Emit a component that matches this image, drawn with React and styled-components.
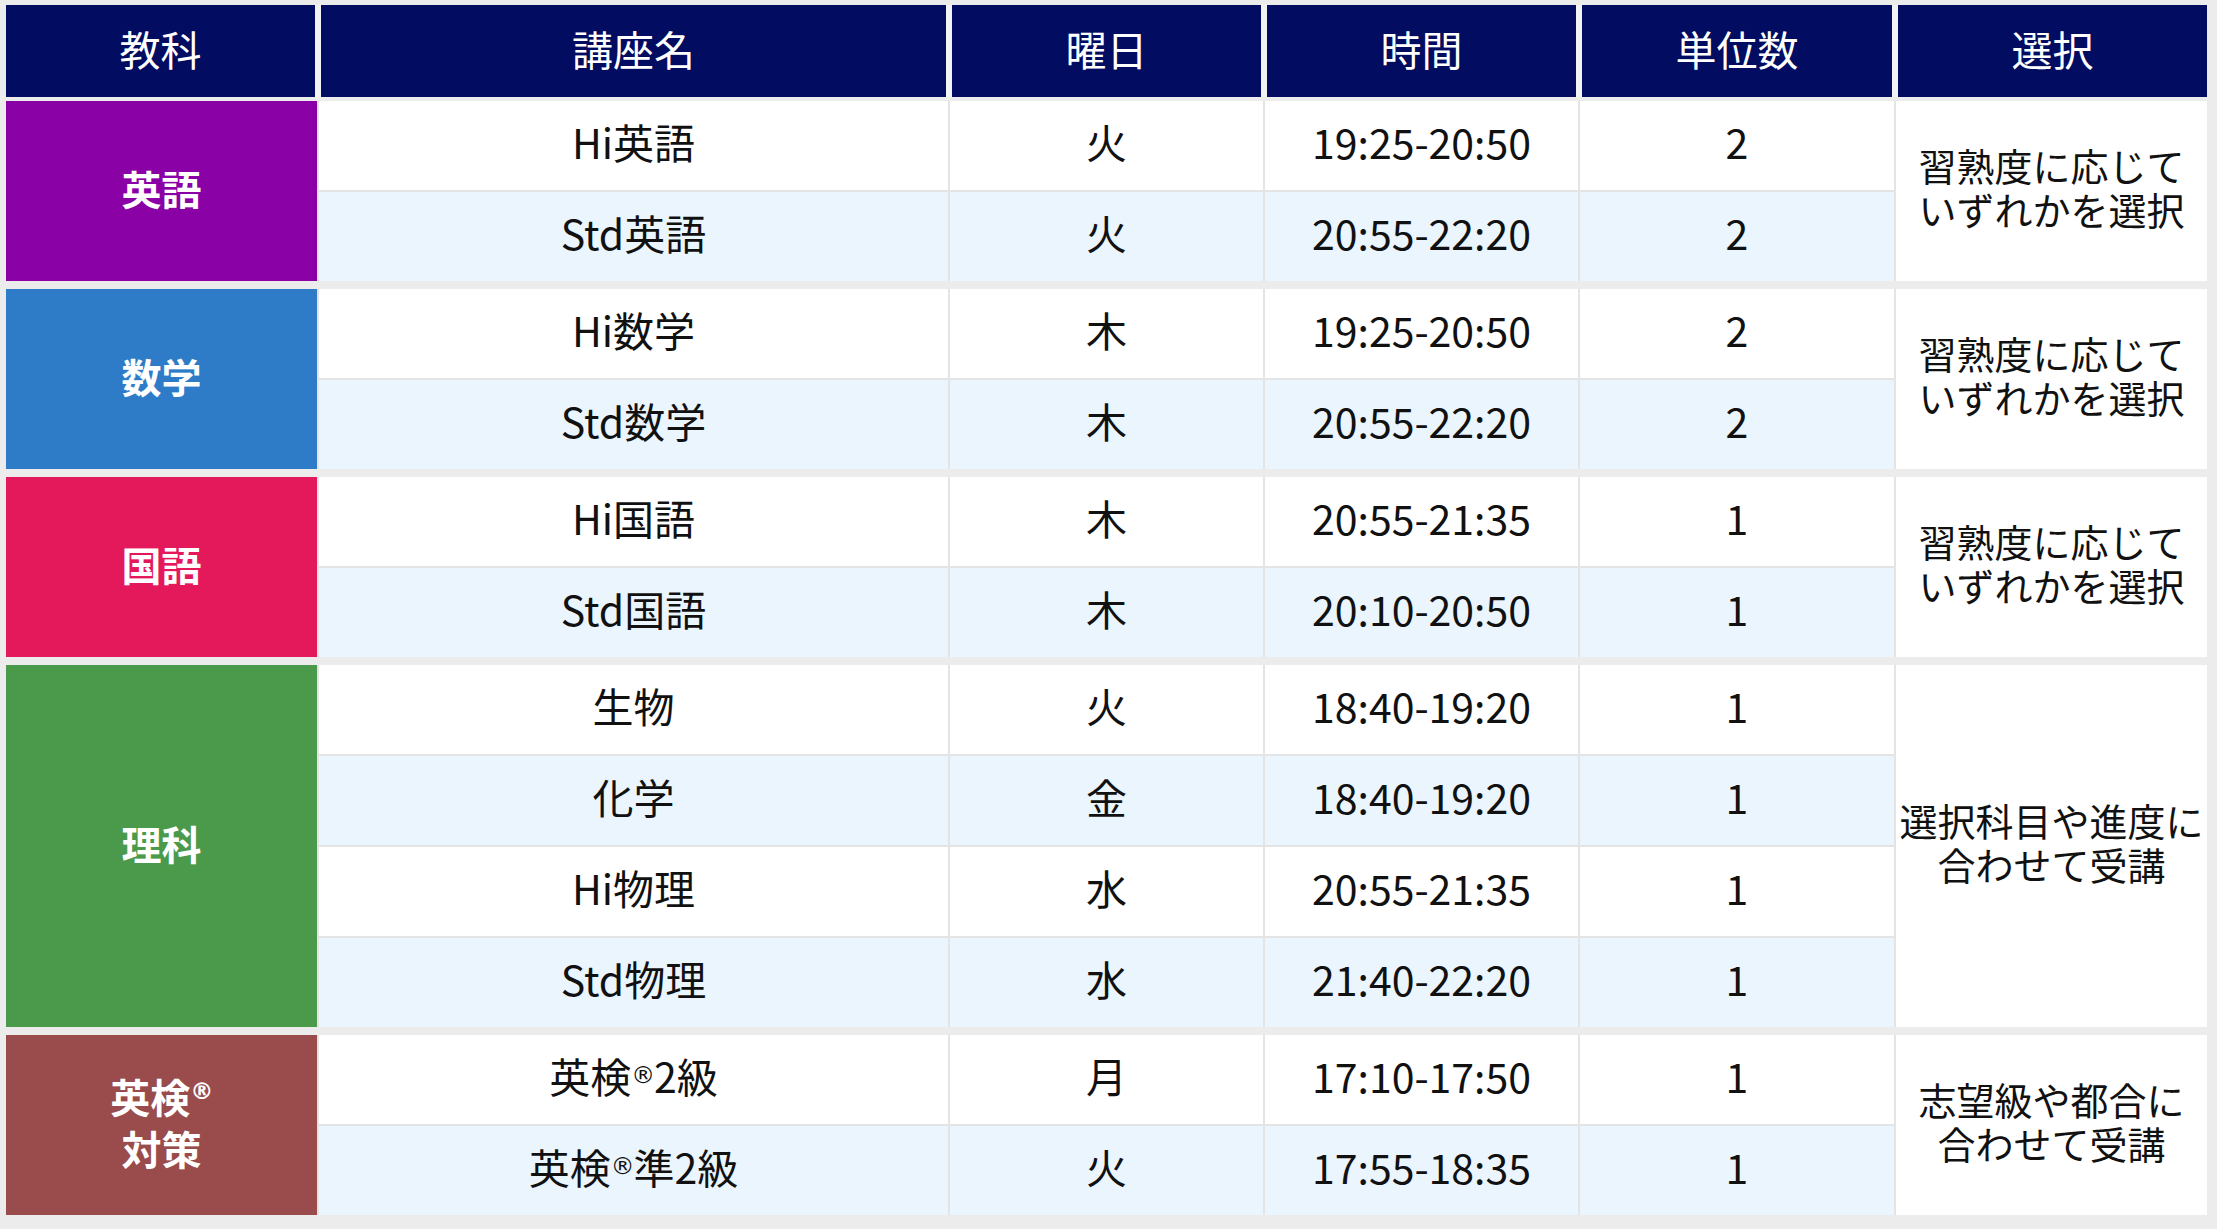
import React from "react";
import styled, { createGlobalStyle } from "styled-components";

const GlobalStyle = createGlobalStyle`
  html, body { margin: 0; padding: 0; background: #ececec; }
  body { font-family: "Noto Sans CJK JP", "Noto Sans", sans-serif; }
`;

const COLS = "311px 629px 313px 313px 314px 311px";

const Page = styled.div`
  padding: 5px 0 0 6px;
  width: 2201px;
`;

const HeadRow = styled.div`
  display: grid;
  grid-template-columns: ${COLS};
  column-gap: 2px;
  height: 92px;
  margin-bottom: 4px;
  background: #f3f3f6;
`;

const HeadCell = styled.div`
  display: flex;
  align-items: center;
  justify-content: center;
  box-sizing: border-box;
  padding-bottom: 6px;
  background: #020c60;
  color: #ffffff;
  font-size: 41px;
  margin: 0 2px;
  &:first-child { margin-left: 0; }
  &:last-child { margin-right: 0; }
`;

const Body = styled.div`
  display: flex;
  flex-direction: column;
  gap: 8px;
`;

const Group = styled.div`
  display: grid;
  grid-template-columns: ${COLS};
  grid-auto-rows: 89px;
  gap: 2px;
  background: #e4e4e4;
`;

const Category = styled.div`
  grid-row: span ${(p) => p.$span};
  display: flex;
  align-items: center;
  justify-content: center;
  box-sizing: border-box;
  padding-bottom: 6px;
  text-align: center;
  background: ${(p) => p.$color};
  color: #ffffff;
  font-weight: 700;
  font-size: 40px;
  line-height: 1.3;
`;

const Cell = styled.div`
  display: flex;
  align-items: center;
  justify-content: center;
  box-sizing: border-box;
  padding-bottom: 9px;
  background: ${(p) => (p.$alt ? "#ebf5fd" : "#ffffff")};
  color: #111111;
  font-size: 41px;
  white-space: nowrap;
`;

const Note = styled.div`
  grid-row: span ${(p) => p.$span};
  display: flex;
  align-items: center;
  justify-content: center;
  box-sizing: border-box;
  padding-bottom: 8px;
  text-align: center;
  background: #ffffff;
  color: #111111;
  font-size: 38px;
  line-height: 1.16;
  white-space: nowrap;
`;

const Reg = styled.span`
  font-family: "DejaVu Sans", sans-serif;
  font-size: 0.58em;
  vertical-align: 0.62em;
  line-height: 0;
  font-weight: ${(p) => (p.$bold ? 700 : 400)};
  letter-spacing: -0.04em;
`;

const headers = ["教科", "講座名", "曜日", "時間", "単位数", "選択"];

const groups = [
  {
    label: "英語",
    color: "#8a01a6",
    note: ["習熟度に応じて", "いずれかを選択"],
    rows: [
      ["Hi英語", "火", "19:25-20:50", "2"],
      ["Std英語", "火", "20:55-22:20", "2"],
    ],
  },
  {
    label: "数学",
    color: "#2e7bc7",
    note: ["習熟度に応じて", "いずれかを選択"],
    rows: [
      ["Hi数学", "木", "19:25-20:50", "2"],
      ["Std数学", "木", "20:55-22:20", "2"],
    ],
  },
  {
    label: "国語",
    color: "#e3195c",
    note: ["習熟度に応じて", "いずれかを選択"],
    rows: [
      ["Hi国語", "木", "20:55-21:35", "1"],
      ["Std国語", "木", "20:10-20:50", "1"],
    ],
  },
  {
    label: "理科",
    color: "#4b9a4c",
    note: ["選択科目や進度に", "合わせて受講"],
    rows: [
      ["生物", "火", "18:40-19:20", "1"],
      ["化学", "金", "18:40-19:20", "1"],
      ["Hi物理", "水", "20:55-21:35", "1"],
      ["Std物理", "水", "21:40-22:20", "1"],
    ],
  },
  {
    label: "eiken",
    color: "#9a4b4b",
    note: ["志望級や都合に", "合わせて受講"],
    rows: [
      [<>英検<Reg>®</Reg>2級</>, "月", "17:10-17:50", "1"],
      [<>英検<Reg>®</Reg>準2級</>, "火", "17:55-18:35", "1"],
    ],
  },
];

function CategoryLabel({ label }) {
  if (label === "eiken") {
    return (
      <>
        英検<Reg $bold>®</Reg>
        <br />
        対策
      </>
    );
  }
  return label;
}

export default function App() {
  return (
    <>
      <GlobalStyle />
      <Page>
        <HeadRow>
          {headers.map((h) => (
            <HeadCell key={h}>{h}</HeadCell>
          ))}
        </HeadRow>
        <Body>
          {groups.map((g, gi) => (
            <Group key={gi}>
              <Category $span={g.rows.length} $color={g.color}>
                <div>
                  <CategoryLabel label={g.label} />
                </div>
              </Category>
              {g.rows.map((r, ri) => (
                <React.Fragment key={ri}>
                  {r.map((v, ci) => (
                    <Cell key={ci} $alt={ri % 2 === 1}>
                      {v}
                    </Cell>
                  ))}
                  {ri === 0 && (
                    <Note $span={g.rows.length}>
                      <div>
                        {g.note[0]}
                        <br />
                        {g.note[1]}
                      </div>
                    </Note>
                  )}
                </React.Fragment>
              ))}
            </Group>
          ))}
        </Body>
      </Page>
    </>
  );
}
